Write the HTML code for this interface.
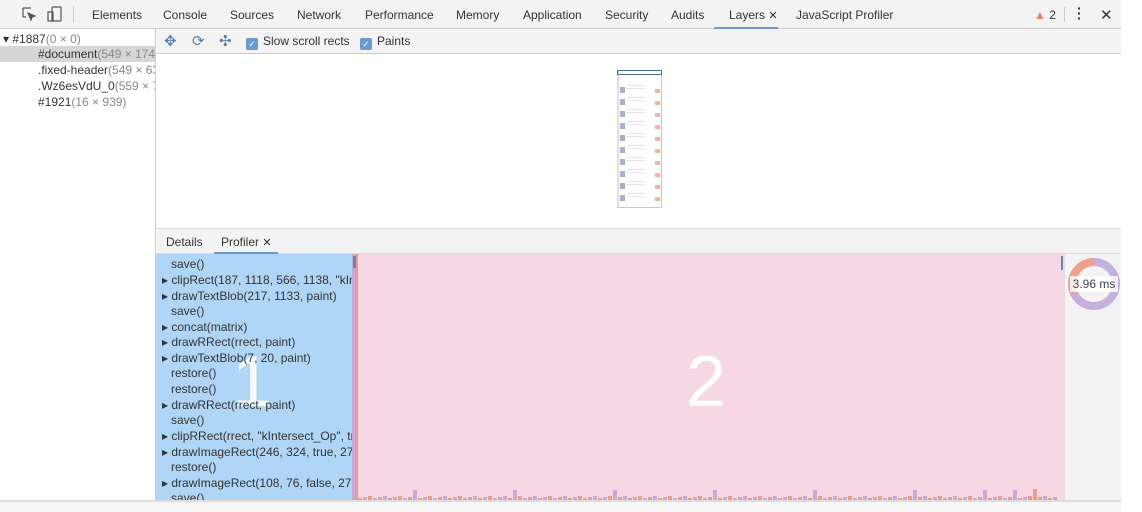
<!DOCTYPE html>
<html><head><meta charset="utf-8"><style>
*{box-sizing:border-box;margin:0;padding:0}
body{width:1142px;height:512px;background:#fff;font-family:"Liberation Sans",sans-serif;font-size:12px;color:#333;position:relative;overflow:hidden}
.abs{position:absolute}
#top{left:0;top:0;width:1121px;height:29px;background:#f3f3f3;border-bottom:1px solid #ccc}
.tab{position:absolute;top:8px;color:#333;font-size:12px}
#left{left:0;top:29px;width:156px;height:471px;background:#fff;border-right:1px solid #ccc}
.tr{position:absolute;left:0;height:16px;line-height:16px;white-space:nowrap;font-size:12px;width:155px;overflow:hidden}
.g{color:#888}
#ltb{left:157px;top:29px;width:964px;height:25px;background:#f3f3f3;border-bottom:1px solid #ccc}
#view{left:157px;top:54px;width:964px;height:174px;background:#fff}
#tabs2{left:157px;top:228px;width:964px;height:26px;background:#f3f3f3;border-top:1px solid #ddd;border-bottom:1px solid #ddd}
#list{left:156px;top:254px;width:197px;height:246px;background:#afd5f7;overflow:hidden}
.row{position:absolute;left:6px;height:16px;line-height:16px;white-space:nowrap;color:#333}
#pink{left:358px;top:254px;width:705px;height:246px;background:#f6d7e4}
#rcol{left:1063px;top:254px;width:58px;height:246px;background:#f3f3f3;border-left:2px solid #e0e0e0}
.cb{display:inline-block;width:12px;height:12px;background:#6b9ad2;border-radius:2px;vertical-align:-2px;margin-right:5px;color:#fff;font-size:9px;text-align:center;line-height:12px}
</style></head><body>
<div id="top" class="abs">
<svg class="abs" style="left:22px;top:7px" width="14" height="14" viewBox="0 0 14 14" fill="none" stroke="#555" stroke-width="1.2"><path d="M1 1h8M1 1v9M1 10h3"/><path d="M6 6l7 3-3 1-1 3z" fill="#555"/></svg>
<svg class="abs" style="left:47px;top:6px" width="16" height="16" viewBox="0 0 16 16" fill="none" stroke="#555" stroke-width="1.2"><rect x="5" y="1" width="9" height="14" rx="1"/><rect x="1" y="6" width="5" height="9"/></svg>
<div class="abs" style="left:73px;top:6px;width:1px;height:17px;background:#ccc"></div>
<span class="tab" style="left:92px">Elements</span>
<span class="tab" style="left:163px">Console</span>
<span class="tab" style="left:230px">Sources</span>
<span class="tab" style="left:297px">Network</span>
<span class="tab" style="left:365px">Performance</span>
<span class="tab" style="left:456px">Memory</span>
<span class="tab" style="left:523px">Application</span>
<span class="tab" style="left:605px">Security</span>
<span class="tab" style="left:671px">Audits</span>
<span class="tab" style="left:729px">Layers <span style="font-size:11px">✕</span></span>
<div class="abs" style="left:714px;top:27px;width:64px;height:2px;background:#6b9ad2"></div>
<span class="tab" style="left:796px">JavaScript Profiler</span>
<span class="tab" style="left:1034px;color:#e6826a">▲<span style="color:#333"> 2</span></span>
<div class="abs" style="top:7px;width:1px;height:15px;background:#ccc;left:1064px"></div>
<span class="tab" style="left:1077px;top:6px;font-weight:bold;line-height:5px;font-size:14px">·<br>·<br>·</span>
<span class="tab" style="left:1100px;top:6px;font-size:15px">✕</span>
</div>
<div id="left" class="abs">
<div class="tr" style="top:2px;left:3px">▾ #1887<span class="g">(0 × 0)</span></div>
<div class="tr" style="top:17px;background:#d6d6d6;padding-left:38px">#document<span class="g">(549 × 1749)</span></div>
<div class="tr" style="top:33px;padding-left:38px">.fixed-header<span class="g">(549 × 63)</span></div>
<div class="tr" style="top:49px;padding-left:38px">.Wz6esVdU_0<span class="g">(559 × 7)</span></div>
<div class="tr" style="top:65px;padding-left:38px">#1921<span class="g">(16 × 939)</span></div>
</div>
<div id="ltb" class="abs">
<span class="abs" style="left:7px;top:3px;font-size:15px;color:#5a7fb0">✥</span>
<span class="abs" style="left:35px;top:3px;font-size:15px;color:#5a7fb0">⟳</span>
<span class="abs" style="left:62px;top:3px;font-size:15px;color:#5a7fb0">✣</span>
<span class="abs" style="left:89px;top:5px"><span class="cb">✓</span>Slow scroll rects</span>
<span class="abs" style="left:203px;top:5px"><span class="cb">✓</span>Paints</span>
</div>
<div id="view" class="abs">
<div class="abs" style="left:460px;top:16px;width:45px;height:138px;background:#fff;border:1px solid #c8c8d8;border-left:2px solid #ddd"></div>
<div class="abs" style="left:460px;top:16px;width:45px;height:5px;border:1px solid #4a6a9a"></div>
<div class="abs" style="left:463px;top:27px;width:5px;height:120px;opacity:.7;background:repeating-linear-gradient(#fff 0 6px,#7890b0 6px 12px)"></div>
<div class="abs" style="left:470px;top:27px;width:18px;height:120px;opacity:.5;background:repeating-linear-gradient(#fff 0 4px,#d8c0d0 4px 5px,#fff 5px 7px,#d8c0d0 7px 8px,#fff 8px 12px)"></div>
<div class="abs" style="left:498px;top:27px;width:5px;height:120px;opacity:.8;background:repeating-linear-gradient(#fff 0 8px,#f0a080 8px 12px)"></div>
</div>
<div id="tabs2" class="abs">
<span class="abs" style="left:9px;top:6px">Details</span>
<span class="abs" style="left:64px;top:6px">Profiler <span style="font-size:11px">✕</span></span>
<div class="abs" style="left:57px;top:23px;width:64px;height:2px;background:#6b9ad2"></div>
</div>
<div id="list" class="abs">
<div class="abs" style="left:76px;top:92px;color:#fff;font-size:72px;line-height:72px;opacity:.9">1</div>
<div class="row" style="top:2px;padding-left:9px">save()</div>
<div class="row" style="top:18px">▸ clipRect(187, 1118, 566, 1138, "kIntersect</div>
<div class="row" style="top:34px">▸ drawTextBlob(217, 1133, paint)</div>
<div class="row" style="top:49px;padding-left:9px">save()</div>
<div class="row" style="top:65px">▸ concat(matrix)</div>
<div class="row" style="top:80px">▸ drawRRect(rrect, paint)</div>
<div class="row" style="top:96px">▸ drawTextBlob(7, 20, paint)</div>
<div class="row" style="top:111px;padding-left:9px">restore()</div>
<div class="row" style="top:127px;padding-left:9px">restore()</div>
<div class="row" style="top:143px">▸ drawRRect(rrect, paint)</div>
<div class="row" style="top:158px;padding-left:9px">save()</div>
<div class="row" style="top:174px">▸ clipRRect(rrect, "kIntersect_Op", true)</div>
<div class="row" style="top:190px">▸ drawImageRect(246, 324, true, 276)</div>
<div class="row" style="top:205px;padding-left:9px">restore()</div>
<div class="row" style="top:221px">▸ drawImageRect(108, 76, false, 276)</div>
<div class="row" style="top:236px;padding-left:9px">save()</div>
</div>
<div class="abs" style="left:352px;top:254px;width:3px;height:246px;background:#c8a8d8"></div>
<div class="abs" style="left:355px;top:254px;width:3px;height:246px;background:#ec9c88"></div>
<div class="abs" style="left:353px;top:256px;width:3px;height:12px;background:#6a86aa"></div>
<div id="pink" class="abs">
<div class="abs" style="left:328px;top:92px;color:#fff;font-size:72px;line-height:72px">2</div>
<div id="bars" class="abs" style="left:0;bottom:0;width:705px;height:16px"></div>
</div>
<div class="abs" style="left:1061px;top:256px;width:3px;height:14px;background:#6a86aa"></div>
<div id="rcol" class="abs">
<svg class="abs" style="left:2px;top:3px" width="54" height="54" viewBox="0 0 54 54"><circle cx="27" cy="27" r="22" fill="none" stroke="#c4b0da" stroke-width="8"/><path d="M27 5A22 22 0 0 0 7 36" fill="none" stroke="#eea088" stroke-width="8"/><rect x="3" y="19" width="48" height="16" fill="#fff" opacity=".8"/><text x="27" y="31" text-anchor="middle" font-family="Liberation Sans" font-size="12" fill="#445">3.96 ms</text></svg>
</div>
<div class="abs" style="left:0;top:500px;width:1121px;height:2px;background:#ddd"></div>
<div class="abs" style="left:0;top:502px;width:1121px;height:10px;background:#f6f6f6"></div>
<script>
var b=document.getElementById('bars'),h='';
for(var i=0;i<140;i++){var x=i*5,hh=2+((i*37)%3),c=i%2?'#c4acd8':'#ee9e88';if(i%20==11)hh=10;if(i==125)hh=10;if(i==135){hh=11;c='#ee9e88'}
h+='<div style="position:absolute;left:'+x+'px;bottom:0;width:4px;height:'+hh+'px;background:'+c+'"></div>';}
b.innerHTML=h;
</script>
</body></html>
